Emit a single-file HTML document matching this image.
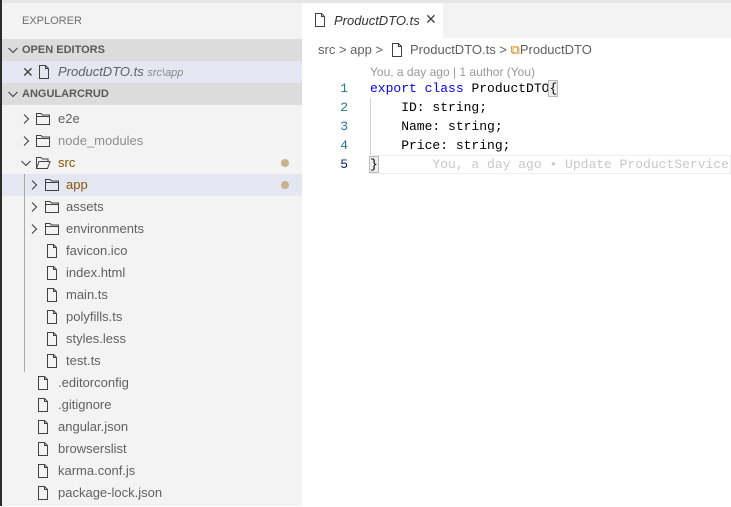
<!DOCTYPE html>
<html><head><meta charset="utf-8"><style>
*{margin:0;padding:0;box-sizing:border-box}
body{width:731px;height:506px;overflow:hidden;background:#fff;font-family:"Liberation Sans",sans-serif;font-size:13px;color:#616161;position:relative}
.a{position:absolute;white-space:nowrap}
#side{position:absolute;left:0;top:0;width:302px;height:506px;background:#f3f3f3}
#inner{position:absolute;left:0;top:1px;width:302px;height:506px}
.row{position:absolute;left:0;width:302px;height:22px;line-height:22px}
.hdr{background:#dcdcdc;font-weight:bold;font-size:11px;color:#5a5a5a}
.sel{background:#e4e6f1}
.t{position:absolute;top:0}
svg{position:absolute}
.mono{font-family:"Liberation Mono","DejaVu Sans Mono",monospace;font-size:13px}
.dot{position:absolute;left:281px;top:7px;width:8px;height:8px;border-radius:50%;background:#c9b38e}
</style></head><body>
<svg width="0" height="0" style="position:absolute"><defs>
<symbol id="fo" viewBox="0 0 16 16"><path d="M1.5 2.5h4.5l1.5 1.5h7v9.5h-13z M1.5 5.5h13" fill="none" stroke="#424242" stroke-width="1"/></symbol>
<symbol id="fopen" viewBox="0 0 16 16"><path d="M1.5 13.5v-11h4.5l1.5 1.5h5.5v2.5 M1.5 13.5l2.5-7h11l-2.5 7z" fill="none" stroke="#424242" stroke-width="1"/></symbol>
<symbol id="fi" viewBox="0 0 16 16"><path d="M3.5 1.5h6l3 3v10h-9z M9.5 1.5v3h3" fill="none" stroke="#424242" stroke-width="1"/></symbol>
<symbol id="cr" viewBox="0 0 16 16"><path d="M6 3.5l4.5 4.5-4.5 4.5" fill="none" stroke="#424242" stroke-width="1.1"/></symbol>
<symbol id="cd" viewBox="0 0 16 16"><path d="M3.5 6l4.5 4.5 4.5-4.5" fill="none" stroke="#424242" stroke-width="1.1"/></symbol>
</defs></svg>
<div id="side">
<div class="a" style="left:0;top:0;width:302px;height:3px;background:#e5e5e5"></div>
<div id="inner">
<div class="a" style="left:22px;top:14px;font-size:11px;color:#6f6f6f">EXPLORER</div>
<div class="row hdr" style="top:38px"><svg style="left:5px;top:3px" width="16" height="16"><use href="#cd"/></svg><span class="t" style="left:22px">OPEN EDITORS</span></div>
<div class="row sel" style="top:60px"><span class="t" style="left:22px;font-size:14px;color:#424242">✕</span><svg style="left:36px;top:3px" width="16" height="16"><use href="#fi"/></svg><span class="t" style="left:58px;font-style:italic;color:#616161">ProductDTO.ts <span style="font-size:11px;color:#888">src\app</span></span></div>
<div class="row hdr" style="top:82px"><svg style="left:5px;top:3px" width="16" height="16"><use href="#cd"/></svg><span class="t" style="left:22px">ANGULARCRUD</span></div>
<div class="row" style="top:107px"><svg style="left:18px;top:3px" width="16" height="16"><use href="#cr"/></svg><svg style="left:35px;top:3px" width="16" height="16"><use href="#fo"/></svg><span class="t" style="left:58px">e2e</span></div>
<div class="row" style="top:129px"><svg style="left:18px;top:3px" width="16" height="16"><use href="#cr"/></svg><svg style="left:35px;top:3px" width="16" height="16"><use href="#fo"/></svg><span class="t" style="left:58px;color:#8e8e8e">node_modules</span></div>
<div class="row" style="top:151px"><svg style="left:18px;top:3px" width="16" height="16"><use href="#cd"/></svg><svg style="left:35px;top:3px" width="16" height="16"><use href="#fopen"/></svg><span class="t" style="left:58px;color:#895503">src</span><span class="dot"></span></div>
<div class="row sel" style="top:173px"><svg style="left:26px;top:3px" width="16" height="16"><use href="#cr"/></svg><svg style="left:44px;top:3px" width="16" height="16"><use href="#fo"/></svg><span class="t" style="left:66px;color:#895503">app</span><span class="dot"></span></div>
<div class="row" style="top:195px"><svg style="left:26px;top:3px" width="16" height="16"><use href="#cr"/></svg><svg style="left:44px;top:3px" width="16" height="16"><use href="#fo"/></svg><span class="t" style="left:66px">assets</span></div>
<div class="row" style="top:217px"><svg style="left:26px;top:3px" width="16" height="16"><use href="#cr"/></svg><svg style="left:44px;top:3px" width="16" height="16"><use href="#fo"/></svg><span class="t" style="left:66px">environments</span></div>
<div class="row" style="top:239px"><svg style="left:44px;top:3px" width="16" height="16"><use href="#fi"/></svg><span class="t" style="left:66px">favicon.ico</span></div>
<div class="row" style="top:261px"><svg style="left:44px;top:3px" width="16" height="16"><use href="#fi"/></svg><span class="t" style="left:66px">index.html</span></div>
<div class="row" style="top:283px"><svg style="left:44px;top:3px" width="16" height="16"><use href="#fi"/></svg><span class="t" style="left:66px">main.ts</span></div>
<div class="row" style="top:305px"><svg style="left:44px;top:3px" width="16" height="16"><use href="#fi"/></svg><span class="t" style="left:66px">polyfills.ts</span></div>
<div class="row" style="top:327px"><svg style="left:44px;top:3px" width="16" height="16"><use href="#fi"/></svg><span class="t" style="left:66px">styles.less</span></div>
<div class="row" style="top:349px"><svg style="left:44px;top:3px" width="16" height="16"><use href="#fi"/></svg><span class="t" style="left:66px">test.ts</span></div>
<div class="a" style="left:24px;top:173px;width:1px;height:198px;background:#a9a9a9"></div>
<div class="row" style="top:371px"><svg style="left:35px;top:3px" width="16" height="16"><use href="#fi"/></svg><span class="t" style="left:58px">.editorconfig</span></div>
<div class="row" style="top:393px"><svg style="left:35px;top:3px" width="16" height="16"><use href="#fi"/></svg><span class="t" style="left:58px">.gitignore</span></div>
<div class="row" style="top:415px"><svg style="left:35px;top:3px" width="16" height="16"><use href="#fi"/></svg><span class="t" style="left:58px">angular.json</span></div>
<div class="row" style="top:437px"><svg style="left:35px;top:3px" width="16" height="16"><use href="#fi"/></svg><span class="t" style="left:58px">browserslist</span></div>
<div class="row" style="top:459px"><svg style="left:35px;top:3px" width="16" height="16"><use href="#fi"/></svg><span class="t" style="left:58px">karma.conf.js</span></div>
<div class="row" style="top:481px"><svg style="left:35px;top:3px" width="16" height="16"><use href="#fi"/></svg><span class="t" style="left:58px">package-lock.json</span></div>
</div>
<div class="a" style="left:0;top:0;width:2px;height:506px;background:#2c2c2c"></div>
</div>
<div class="a" style="left:302px;top:0;width:429px;height:3px;background:#e5e5e5"></div>
<div class="a" style="left:302px;top:3px;width:429px;height:35px;background:#f3f3f3"></div>
<div class="a" style="left:302px;top:3px;width:141px;height:35px;background:#fff"></div>
<svg style="left:312px;top:12px" width="16" height="16"><use href="#fi"/></svg>
<div class="a" style="left:334px;top:13px;font-style:italic;color:#333">ProductDTO.ts</div>
<div class="a" style="left:425px;top:11px;font-size:14px;color:#424242">✕</div>
<div class="a" style="left:318px;top:42px;color:#616161">src &gt; app &gt; </div>
<svg style="left:389px;top:42px" width="16" height="16"><use href="#fi"/></svg>
<div class="a" style="left:410px;top:42px;color:#616161">ProductDTO.ts &gt; <span style="color:#d67e00">⧉</span>ProductDTO</div>
<div class="a" style="left:370px;top:65px;font-size:12px;color:#999">You, a day ago | 1 author (You)</div>
<div class="a mono" style="left:336px;top:79px;width:12px;text-align:right;line-height:19px;color:#237893">1<br>2<br>3<br>4<br><span style="color:#0b216f">5</span></div>
<div class="a" style="left:370px;top:155px;width:361px;height:19px;border:1px solid #eeeeee"></div>
<div class="a" style="left:370px;top:98px;width:1px;height:57px;background:#d3d3d3"></div>
<div class="a mono" style="left:370px;top:79px;line-height:19px;color:#000;white-space:pre"><span style="color:#0000ff">export</span> <span style="color:#0000ff">class</span> ProductDTO<span style="outline:1px solid #b9b9b9;background:#eee">{</span>
    ID: string;
    Name: string;
    Price: string;
<span style="outline:1px solid #b9b9b9;background:#eee">}</span>       <span style="color:#c8c8c8">You, a day ago • Update ProductService c</span></div>
</body></html>
